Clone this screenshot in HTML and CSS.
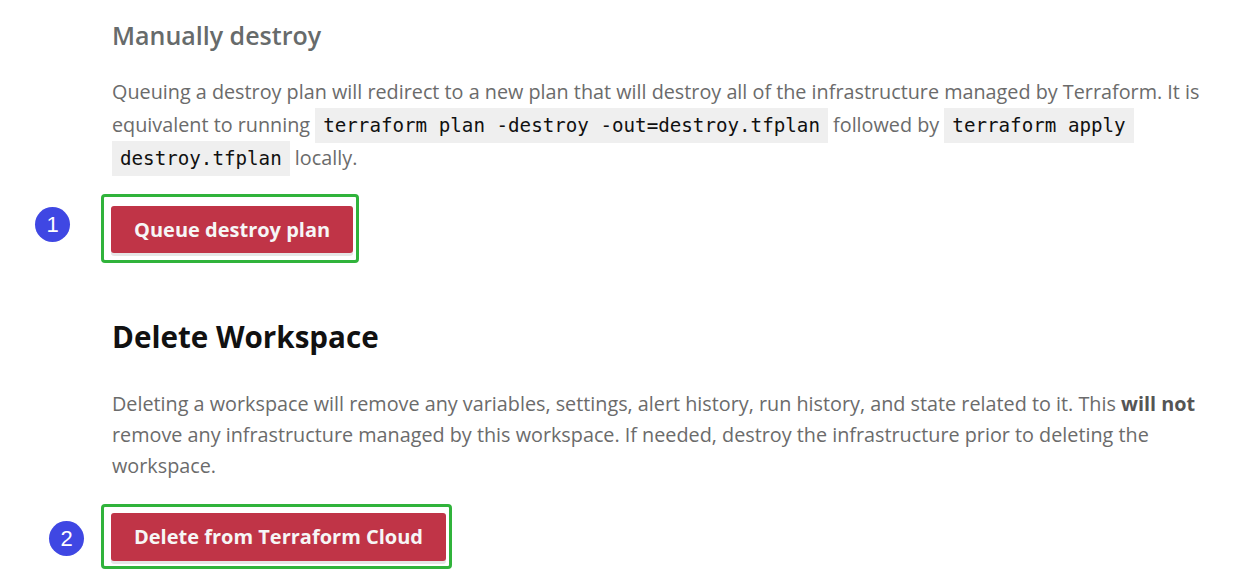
FILE: index.html
```html
<!DOCTYPE html>
<html lang="en">
<head>
<meta charset="utf-8">
<title>Workspace settings</title>
<link rel="stylesheet" href="styles.css">
</head>
<body>
<main class="page">
  <section class="section section-destroy">
    <h2 class="sub-title">Manually destroy</h2>
    <p class="desc">Queuing a destroy plan will redirect to a new plan that will destroy all of the infrastructure managed by Terraform. It is<br>equivalent to running <code class="code">terraform plan -destroy -out=destroy.tfplan</code> followed by <code class="code">terraform apply</code><br><code class="code">destroy.tfplan</code> locally.</p>
    <div class="action action-1">
      <span class="badge badge-1">1</span>
      <div class="highlight">
        <button class="btn-danger" type="button">Queue destroy plan</button>
      </div>
    </div>
  </section>
  <section class="section section-delete">
    <h2 class="title">Delete Workspace</h2>
    <p class="desc desc-delete">Deleting a workspace will remove any variables, settings, alert history, run history, and state related to it. This <strong>will not</strong><br>remove any infrastructure managed by this workspace. If needed, destroy the infrastructure prior to deleting the<br>workspace.</p>
    <div class="action action-2">
      <span class="badge badge-2">2</span>
      <div class="highlight highlight-2">
        <button class="btn-danger" type="button">Delete from Terraform Cloud</button>
      </div>
    </div>
  </section>
</main>
</body>
</html>
```

FILE: styles.css
```css
html, body {
  margin: 0;
  padding: 0;
  background: #ffffff;
}

.page {
  padding: 0 0 0 112px;
  font-family: "Open Sans", "Noto Sans", "Liberation Sans", sans-serif;
  color: #6b6b6b;
}

.section {
  display: flex;
  flex-direction: column;
  align-items: flex-start;
}

.sub-title {
  margin: 19px 0 0 0;
  font-size: 25px;
  line-height: 32px;
  font-weight: 600;
  color: #676b6b;
}

.desc {
  margin: 25px 0 0 0;
  font-size: 19.8px;
  line-height: 32.5px;
  white-space: nowrap;
  color: #6b6b6b;
}

.desc strong {
  color: #555;
  font-weight: 700;
}

.code {
  font-family: "DejaVu Sans Mono", "Liberation Mono", monospace;
  font-size: 19.2px;
  color: #111;
  background: #efefef;
  padding: 6px 8px;
}

.action {
  position: relative;
  margin-top: 18px;
  margin-left: -11px;
}

.highlight {
  border: 3px solid #30b33b;
  border-radius: 4px;
  padding: 9px 3px 7px 7px;
}

.highlight-2 {
  padding: 6px 3px 5px 7px;
}

.btn-danger {
  display: block;
  margin: 0;
  border: 0;
  border-radius: 3px;
  background: #c03447;
  color: #f6f6f6;
  font-family: "Open Sans", "Noto Sans", sans-serif;
  font-weight: 700;
  font-size: 20px;
  height: 47px;
  padding: 0 23px;
  box-shadow: 0 3px 0 #e6e6e6;
}

.badge {
  position: absolute;
  width: 35px;
  height: 35px;
  border-radius: 50%;
  background: #3f47e3;
  color: #ffffff;
  font-family: "Liberation Sans", Arial, sans-serif;
  font-size: 22px;
  line-height: 35px;
  text-align: center;
}

.badge-1 {
  left: -66px;
  top: 13px;
}

.badge-2 {
  left: -52px;
  top: 17px;
}

.section-delete {
  margin-top: 54px;
}

.title {
  margin: 0;
  font-size: 29.6px;
  line-height: 40px;
  font-weight: 700;
  color: #111111;
}

.desc-delete {
  margin-top: 31px;
  line-height: 31px;
}

.action-2 {
  margin-top: 23px;
}

.highlight-2 .btn-danger {
  height: 48px;
}
```
